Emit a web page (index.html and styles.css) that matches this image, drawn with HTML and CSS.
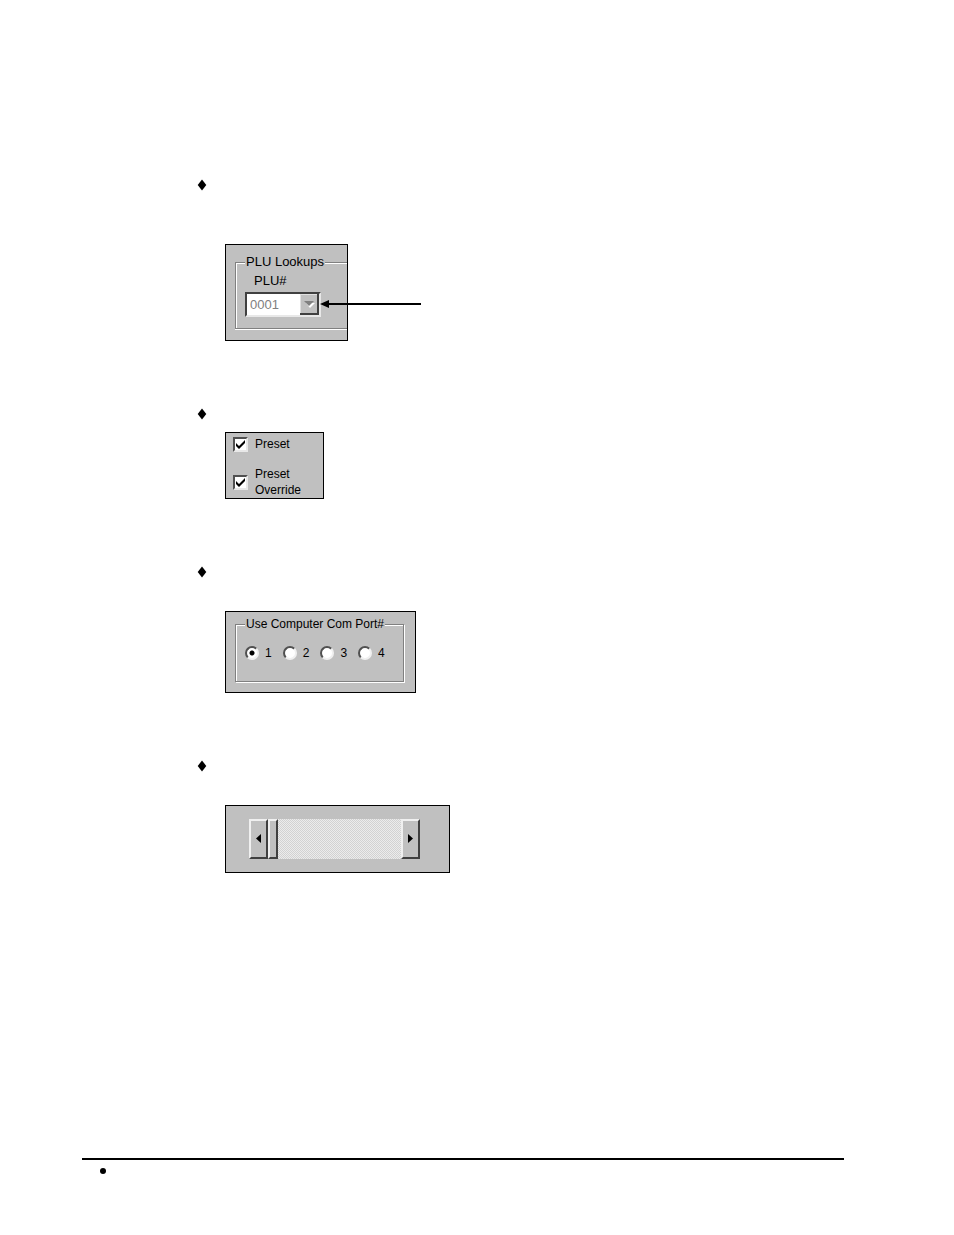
FILE: index.html
```html
<!DOCTYPE html>
<html lang="en">
<head>
    <meta charset="UTF-8">
    <meta name="viewport" content="width=device-width, initial-scale=1.0">
    <title>Window Controls</title>
    <link rel="stylesheet" href="styles.css">
</head>
<body>
    <main>
        <ul class="controls">
            <li>
                <svg class="marker" width="10" height="18" viewBox="0 0 10 18"><path d="M5 3.5L9.3 9L5 14.5L0.7 9Z"/></svg>
                <div class="panel lookup-panel">
                    <fieldset class="group lookup-group">
                        <legend>PLU Lookups</legend>
                        <label for="plu">PLU#</label>
                        <div class="combo">
                            <select id="plu" disabled>
                                <option>0001</option>
                            </select>
                            <svg class="combo-arrow" width="19" height="21" viewBox="0 0 19 21">
                                <path fill="#c0c0c0" d="M0 0h19v21H0z"/>
                                <path fill="#e0e0e0" d="M0 0h18v1H1v19H0z"/>
                                <path fill="#404040" d="M17 0h2v21H0v-2h17z"/>
                                <path fill="#fff" d="M6 9h9l-5 5z"/>
                                <path fill="#808080" d="M4 7h10l-5 5z"/>
                            </svg>
                        </div>
                    </fieldset>
                    <svg class="pointer" width="101" height="10" viewBox="0 0 101 10"><path d="M0 5l9-4v3h92v2H9v3z"/></svg>
                </div>
            </li>
            <li>
                <svg class="marker" width="10" height="18" viewBox="0 0 10 18"><path d="M5 3.5L9.3 9L5 14.5L0.7 9Z"/></svg>
                <div class="panel check-panel">
                    <label><input type="checkbox" checked><span>Preset</span></label>
                    <label><input type="checkbox" checked><span>Preset<br>Override</span></label>
                </div>
            </li>
            <li>
                <svg class="marker" width="10" height="18" viewBox="0 0 10 18"><path d="M5 3.5L9.3 9L5 14.5L0.7 9Z"/></svg>
                <div class="panel port-panel">
                    <fieldset class="group port-group">
                        <legend>Use Computer Com Port#</legend>
                        <div class="ports">
                            <label><input type="radio" name="port" value="1" checked>1</label>
                            <label><input type="radio" name="port" value="2">2</label>
                            <label><input type="radio" name="port" value="3">3</label>
                            <label><input type="radio" name="port" value="4">4</label>
                        </div>
                    </fieldset>
                </div>
            </li>
            <li>
                <svg class="marker" width="10" height="18" viewBox="0 0 10 18"><path d="M5 3.5L9.3 9L5 14.5L0.7 9Z"/></svg>
                <div class="panel scroll-panel">
                    <button type="button" aria-label="Scroll left"><svg width="5" height="9" viewBox="0 0 5 9"><path d="M5 0v9L0 4.5z"/></svg></button>
                    <input type="range" min="0" max="100" value="0" aria-label="Scroll position">
                    <button type="button" aria-label="Scroll right"><svg width="5" height="9" viewBox="0 0 5 9"><path d="M0 0v9l5-4.5z"/></svg></button>
                </div>
            </li>
        </ul>
    </main>
    <footer>
        <svg width="6" height="6" viewBox="0 0 6 6"><circle cx="3" cy="3" r="3"/></svg>
    </footer>
</body>
</html>
```

FILE: styles.css
```css
* {
    box-sizing: border-box;
}
body {
    font-family: "Liberation Sans", Arial, sans-serif;
    font-size: 12px;
    line-height: 16px;
    color: #000;
    background-color: #fff;
    margin: 0;
    padding: 176px 110px 0 82px;
    min-height: 100vh;
    display: flex;
    flex-direction: column;
}
svg {
    display: block;
}
.controls {
    list-style: none;
    margin: 0;
    padding: 0 0 0 115px;
    display: flex;
    flex-direction: column;
    gap: 64px;
}
.controls li {
    display: flex;
    align-items: flex-start;
    gap: 18px;
}
.panel {
    background-color: #c0c0c0;
    border: 1px solid #000;
    margin-top: 48px;
}

/* etched group box */
.group {
    margin: 0;
    min-width: 0;
    border: 1px solid #808080;
    box-shadow: 1px 1px #fff, inset 1px 1px #fff;
}
.group legend {
    padding: 0 1px;
    background-color: #c0c0c0;
}

/* drop-down */
.lookup-panel {
    position: relative;
    margin-top: 68px;
    padding: 9px 0 11px 9px;
    font-size: 13px;
}
.lookup-group {
    padding: 3px 26px 11px 9px;
    border-right: none;
    box-shadow: 0 1px #fff, inset 1px 1px #fff;
}
.lookup-group legend {
    margin-right: -4px;
}
.lookup-group label {
    display: block;
    padding-left: 9px;
    margin-bottom: 3px;
}
.combo {
    position: relative;
    width: 76px;
}
.combo select {
    appearance: none;
    display: block;
    width: 100%;
    height: 25px;
    margin: 0;
    padding: 0 20px 0 3px;
    border: 2px solid;
    border-color: #404040 #e8e8e8 #e8e8e8 #404040;
    border-radius: 0;
    background-color: #fff;
    font: inherit;
    color: #808080;
    opacity: 1;
}
.combo-arrow {
    position: absolute;
    top: 2px;
    right: 2px;
    pointer-events: none;
}
.pointer {
    position: absolute;
    top: 54px;
    left: 94px;
}

/* tick boxes */
.check-panel {
    display: flex;
    flex-direction: column;
    gap: 14px;
    margin-top: 27px;
    padding: 3px 22px 0 7px;
}
.check-panel label {
    display: flex;
    align-items: center;
    gap: 7px;
}
input[type="checkbox"] {
    appearance: none;
    width: 15px;
    height: 15px;
    margin: 0;
    border: 2px solid;
    border-color: #505050 #e8e8e8 #e8e8e8 #505050;
    background-color: #fff;
}
input[type="checkbox"]:checked {
    background-image: url("data:image/svg+xml,%3Csvg xmlns='http://www.w3.org/2000/svg' viewBox='0 0 11 11'%3E%3Cpath d='M1 4l3 3L10 1v3L4 10L1 7z'/%3E%3C/svg%3E");
}

/* radio buttons */
.port-panel {
    padding: 4px 11px 10px 9px;
}
.port-group {
    padding: 13px 18px 20px 9px;
}
.ports {
    display: flex;
    gap: 11px;
}
.ports label {
    display: flex;
    align-items: center;
    gap: 6px;
}
input[type="radio"] {
    appearance: none;
    width: 14px;
    height: 14px;
    margin: 0;
    border: 2px solid;
    border-color: #505050 #f0f0f0 #f0f0f0 #505050;
    border-radius: 50%;
    background-color: #fff;
}
input[type="radio"]:checked {
    background-image: radial-gradient(circle, #000 2px, #fff 3px);
}

/* scroll bar */
.scroll-panel {
    display: flex;
    padding: 13px 29px 13px 23px;
}
.scroll-panel button {
    display: flex;
    align-items: center;
    justify-content: center;
    width: 19px;
    height: 40px;
    padding: 0 1px 2px 0;
    border: 2px solid;
    border-color: #f0f0f0 #404040 #404040 #f0f0f0;
    background-color: #c0c0c0;
}
input[type="range"] {
    appearance: none;
    width: 133px;
    height: 40px;
    margin: 0;
    background: repeating-conic-gradient(#d2d2d2 0 25%, #ececec 0 50%) 0 0 / 2px 2px;
}
input[type="range"]::-webkit-slider-thumb {
    appearance: none;
    width: 10px;
    height: 40px;
    border: 2px solid;
    border-color: #f0f0f0 #404040 #404040 #f0f0f0;
    background-color: #c0c0c0;
}

footer {
    margin-top: auto;
    height: 77px;
    border-top: 2px solid #000;
    padding: 8px 18px;
}
```
